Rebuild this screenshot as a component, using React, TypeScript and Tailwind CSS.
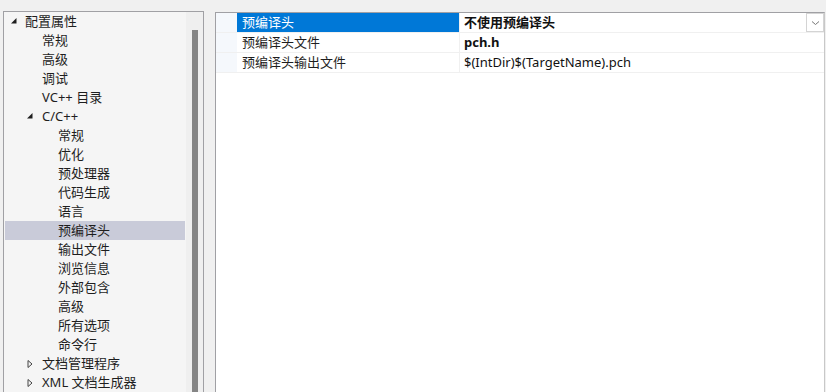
import React from "react";

type TreeItem = {
  label: string;
  level: number;
  toggle?: "open" | "closed";
  selected?: boolean;
};

const items: TreeItem[] = [
  { label: "配置属性", level: 0, toggle: "open" },
  { label: "常规", level: 1 },
  { label: "高级", level: 1 },
  { label: "调试", level: 1 },
  { label: "VC++ 目录", level: 1 },
  { label: "C/C++", level: 1, toggle: "open" },
  { label: "常规", level: 2 },
  { label: "优化", level: 2 },
  { label: "预处理器", level: 2 },
  { label: "代码生成", level: 2 },
  { label: "语言", level: 2 },
  { label: "预编译头", level: 2, selected: true },
  { label: "输出文件", level: 2 },
  { label: "浏览信息", level: 2 },
  { label: "外部包含", level: 2 },
  { label: "高级", level: 2 },
  { label: "所有选项", level: 2 },
  { label: "命令行", level: 2 },
  { label: "文档管理程序", level: 1, toggle: "closed" },
  { label: "XML 文档生成器", level: 1, toggle: "closed" },
];

function Toggle({ kind }: { kind: "open" | "closed" }) {
  if (kind === "open") {
    return (
      <svg width="8" height="8" viewBox="0 0 8 8">
        <path d="M6.5 1 L6.5 6.5 L1 6.5 Z" fill="#1e1e1e" />
      </svg>
    );
  }
  return (
    <svg width="8" height="10" viewBox="0 0 8 10">
      <path d="M2 1.5 L6 5 L2 8.5 Z" fill="none" stroke="#444" strokeWidth="1" />
    </svg>
  );
}

function TreeRow({ item }: { item: TreeItem }) {
  // text x: level0 -> 25, level1 -> 42, level2 -> 58
  const textPad = item.level === 0 ? "pl-[20px]" : item.level === 1 ? "pl-[37px]" : "pl-[53px]";
  const togglePad = item.level === 0 ? "left-[5px]" : "left-[21px]";
  return (
    <div
      className={`relative h-[19px] flex items-center ${textPad} ${
        item.selected ? "bg-[#c9cbd9]" : ""
      }`}
    >
      {item.toggle && (
        <span className={`absolute top-[5px] ${togglePad} flex`}>
          <Toggle kind={item.toggle} />
        </span>
      )}
      <span className="whitespace-nowrap leading-[19px] text-[#1e1e1e]">{item.label}</span>
    </div>
  );
}

function PropRow({
  name,
  value,
  bold,
  active,
}: {
  name: string;
  value: string;
  bold?: boolean;
  active?: boolean;
}) {
  return (
    <div className="flex h-[20px] border-b border-[#f0f0f0]">
      <div className="w-[21px] bg-[#f5f8fc]" />
      <div
        className={`w-[223px] pl-[5px] flex items-center border-r border-[#f0f0f0] ${
          active ? "bg-[#0078d7] text-white" : "text-[#1e1e1e]"
        }`}
      >
        <span className="leading-[19px] whitespace-nowrap">{name}</span>
      </div>
      <div className="flex-1 flex items-center pl-[4px] relative">
        <span className={`leading-[19px] whitespace-nowrap text-[#111] ${bold ? "font-bold" : ""}`}>
          {value}
        </span>
        {active && (
          <div className="absolute right-0 top-0 h-[19px] w-[18px] border border-[#d4d4d4] bg-white flex items-center justify-center">
            <svg width="9" height="6" viewBox="0 0 9 6">
              <path d="M1 1.5 L4.5 4.5 L8 1.5" fill="none" stroke="#777" strokeWidth="1" />
            </svg>
          </div>
        )}
      </div>
    </div>
  );
}

export default function App() {
  return (
    <div className="w-[826px] h-[392px] overflow-hidden bg-[#f0f0f0] flex pl-[3px] pt-[11px] font-['Noto_Sans','Noto_Sans_CJK_SC',sans-serif] text-[13px]">
      {/* tree */}
      <div className="w-[201px] h-[400px] border border-[#a0a0a4] bg-[#f5f5f5] flex shrink-0">
        <div className="flex-1 px-[1px]">
          {items.map((it, i) => (
            <TreeRow key={i} item={it} />
          ))}
        </div>
        <div className="w-[17px] bg-[#efefef] pt-[18px] flex justify-center">
          <div className="w-[6px] h-[380px] bg-[#858585]" />
        </div>
      </div>

      {/* property grid */}
      <div className="ml-[11px] mt-[1px] mr-[1px] flex-1 h-[400px] border border-[#a0a0a4] border-r-[#c8c8c8] bg-white">
        <PropRow name="预编译头" value="不使用预编译头" bold active />
        <PropRow name="预编译头文件" value="pch.h" bold />
        <PropRow name="预编译头输出文件" value="$(IntDir)$(TargetName).pch" />
      </div>
    </div>
  );
}
